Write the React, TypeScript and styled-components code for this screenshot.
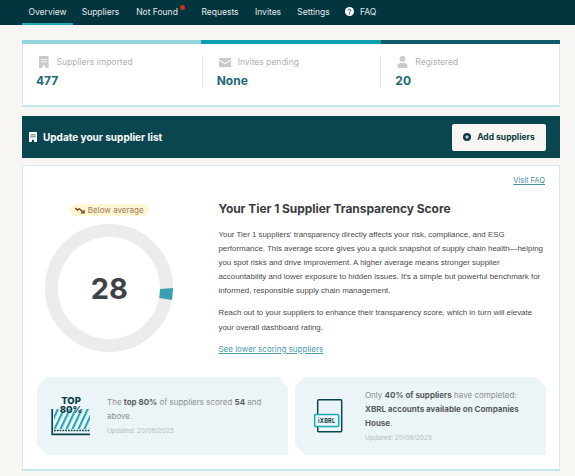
import React from 'react';
import styled, { createGlobalStyle } from 'styled-components';

const GlobalStyle = createGlobalStyle`
  html, body {
    margin: 0;
    padding: 0;
    background: #f7f6f2;
  }
  body {
    font-family: Inter, "Open Sans", sans-serif;
    color: #444;
  }
  * {
    box-sizing: border-box;
  }
`;

const NAV_ITEMS = [
  { label: 'Overview', width: 51, after: 2, active: true },
  { label: 'Suppliers', width: 51, after: 3 },
  { label: 'Not Found', width: 56, after: 10, dot: true },
  { label: 'Requests', width: 50, after: 3 },
  { label: 'Invites', width: 40, after: 2 },
  { label: 'Settings', width: 47, after: 10 },
];

const STAT_SEGMENTS = ['#93d5df', '#0f9fae', '#0f5c68'];

const BuildingIcon = ({ size = 12, color = '#c9cbc8' }: { size?: number; color?: string }) => (
  <svg width={size * 0.8} height={size} viewBox="0 0 10 12.5" fill={color}>
    <path
      fillRule="evenodd"
      d="M1 0h8a1 1 0 0 1 1 1v11.5H6.4V9.8H3.6v2.7H0V1a1 1 0 0 1 1-1zM1.8 3v1h6.4V3zM1.8 5.6v1h6.4v-1z"
    />
  </svg>
);

const MailIcon = () => (
  <svg width="12" height="9" viewBox="0 0 12 9" fill="#c9cbc8">
    <path d="M0 0h12v1.4L6 5 0 1.4z" />
    <path d="M0 2.6 6 6.2l6-3.6V9H0z" />
  </svg>
);

const UserIcon = () => (
  <svg width="11" height="12" viewBox="0 0 11 12" fill="#c9cbc8">
    <circle cx="5.5" cy="3" r="2.9" />
    <path d="M0.6 12V9.6C0.6 7.6 2.4 6.7 5.5 6.7s4.9.9 4.9 2.9V12z" />
  </svg>
);

const HelpIcon = () => (
  <svg width="9" height="9" viewBox="0 0 9 9">
    <circle cx="4.5" cy="4.5" r="4.5" fill="#fff" />
    <path d="M3.2 3.5c0-.8.6-1.3 1.3-1.3s1.3.5 1.3 1.2c0 1-1.2 1-1.2 2" fill="none" stroke="#03353f" strokeWidth="0.9" />
    <circle cx="4.5" cy="6.8" r="0.6" fill="#03353f" />
  </svg>
);

const PlusCircleIcon = () => (
  <svg width="8" height="8" viewBox="0 0 8 8">
    <circle cx="4" cy="4" r="4" fill="#0a3a44" />
    <path d="M4 2.2v3.6M2.2 4h3.6" stroke="#f7f6f2" strokeWidth="1.1" />
  </svg>
);

const TrendDownIcon = () => (
  <svg width="10" height="7" viewBox="0 0 10 7" fill="none">
    <path d="M0.3 1 2.6 3 4.3 1.8 7.5 4.6" stroke="#7d431a" strokeWidth="1.4" />
    <path d="M5.4 6.4h4.3V2.4z" fill="#7d431a" />
  </svg>
);

const Top80Icon = () => (
  <svg width="42" height="40" viewBox="0 0 42 40">
    <defs>
      <pattern id="hatch" width="5.4" height="5.4" patternUnits="userSpaceOnUse" patternTransform="rotate(25)">
        <rect width="2.1" height="5.4" fill="#1ea7b5" />
      </pattern>
    </defs>
    <rect x="3" y="13" width="36" height="20" fill="url(#hatch)" />
    <path d="M3 34.5h36" stroke="#0a4650" strokeWidth="1.3" strokeDasharray="1.8 1" />
    <path d="M1.2 13v25.4H39" fill="none" stroke="#0a4650" strokeWidth="1.7" />
    <Top80Label x="20" y="7.5" textAnchor="middle">TOP</Top80Label>
    <Top80Label x="20" y="16.5" textAnchor="middle">80%</Top80Label>
  </svg>
);

const XbrlIcon = () => (
  <svg width="34" height="36" viewBox="0 0 34 36">
    <rect x="4.7" y="1.7" width="24" height="32" rx="1" fill="none" stroke="#0a4650" strokeWidth="1.5" />
    <rect x="1.7" y="16.5" width="24" height="12" rx="1" fill="#ebf4f7" stroke="#1ea7b5" strokeWidth="1.5" />
    <XbrlLabel x="13.7" y="24.7" textAnchor="middle">iXBRL</XbrlLabel>
  </svg>
);

const Top80Label = styled.text`
  font-family: Inter, sans-serif;
  font-size: 9.5px;
  font-weight: 800;
  fill: #0a3a44;
  paint-order: stroke;
  stroke: #ebf4f7;
  stroke-width: 0.6px;
`;

const XbrlLabel = styled.text`
  font-family: Inter, sans-serif;
  font-size: 5.6px;
  font-weight: 700;
  letter-spacing: 0.2px;
  fill: #0a3a44;
`;

const ScoreGauge = ({ score }: { score: number }) => (
  <GaugeWrap>
    <svg width="128" height="128" viewBox="0 0 128 128">
      <circle cx="64" cy="64" r="57.5" fill="none" stroke="#ececec" strokeWidth="13" />
      <path d="M115 65 128 64 127 76 114.3 74z" fill="#37a0b2" />
    </svg>
    <GaugeValue>{score}</GaugeValue>
  </GaugeWrap>
);

const App = () => (
  <>
    <GlobalStyle />
    <Nav>
      {NAV_ITEMS.map((item) => (
        <NavItem key={item.label} $active={item.active} $width={item.width} $after={item.after}>
          {item.label}
          {item.dot && <NavDot />}
        </NavItem>
      ))}
      <FaqItem>
        <HelpIcon />
        FAQ
      </FaqItem>
    </Nav>
    <Page>
      <StatsCard>
        <StatsStrip>
          {STAT_SEGMENTS.map((color) => (
            <StripSegment key={color} $color={color} />
          ))}
        </StatsStrip>
        <StatsGrid>
          <StatCell>
            <StatLabel>
              <BuildingIcon />
              Suppliers imported
            </StatLabel>
            <StatValue>477</StatValue>
          </StatCell>
          <StatCell>
            <StatLabel>
              <MailIcon />
              Invites pending
            </StatLabel>
            <StatValue>None</StatValue>
          </StatCell>
          <StatCell>
            <StatLabel>
              <UserIcon />
              Registered
            </StatLabel>
            <StatValue>20</StatValue>
          </StatCell>
        </StatsGrid>
      </StatsCard>

      <Banner>
        <BannerTitle>
          <BuildingIcon size={10} color="#fff" />
          Update your supplier list
        </BannerTitle>
        <AddButton>
          <PlusCircleIcon />
          Add suppliers
        </AddButton>
      </Banner>

      <ScoreCard>
        <FaqLink>Visit FAQ</FaqLink>
        <ScoreBody>
          <GaugeColumn>
            <Badge>
              <TrendDownIcon />
              Below average
            </Badge>
            <ScoreGauge score={28} />
          </GaugeColumn>
          <Copy>
            <Heading>Your Tier 1 Supplier Transparency Score</Heading>
            <Paragraph>
              Your Tier 1 suppliers' transparency directly affects your risk, compliance, and ESG
              performance. This average score gives you a quick snapshot of supply chain health—helping
              you spot risks and drive improvement. A higher average means stronger supplier
              accountability and lower exposure to hidden issues. It's a simple but powerful benchmark for
              informed, responsible supply chain management.
            </Paragraph>
            <Paragraph>
              Reach out to your suppliers to enhance their transparency score, which in turn will elevate
              your overall dashboard rating.
            </Paragraph>
            <LowerLink>See lower scoring suppliers</LowerLink>
          </Copy>
        </ScoreBody>
        <InsightGrid>
          <Insight>
            <InsightIcon>
              <Top80Icon />
            </InsightIcon>
            <div>
              <InsightText>
                The <strong>top 80%</strong> of suppliers scored <strong>54</strong> and
                <br />
                above.
              </InsightText>
              <Updated>Updated: 20/08/2025</Updated>
            </div>
          </Insight>
          <Insight>
            <InsightIcon>
              <XbrlIcon />
            </InsightIcon>
            <div>
              <InsightText>
                Only <strong>40% of suppliers</strong> have completed:{' '}
                <strong>XBRL accounts available on Companies House</strong>.
              </InsightText>
              <Updated>Updated: 20/08/2025</Updated>
            </div>
          </Insight>
        </InsightGrid>
      </ScoreCard>
    </Page>
  </>
);

const Nav = styled.nav`
  display: flex;
  height: 25px;
  padding-left: 22px;
  background: #03353f;
`;

const NavItem = styled.a<{ $active?: boolean; $width: number; $after: number }>`
  position: relative;
  display: flex;
  align-items: center;
  justify-content: center;
  width: ${(p) => p.$width}px;
  margin-right: ${(p) => p.$after}px;
  font-size: 8.5px;
  color: #e0e8e9;
  border-bottom: 2px solid ${(p) => (p.$active ? '#1ea7b5' : 'transparent')};
`;

const NavDot = styled.span`
  position: absolute;
  top: 5px;
  right: 0;
  width: 5px;
  height: 5px;
  border-radius: 50%;
  background: #c9301f;
`;

const FaqItem = styled.a`
  display: flex;
  align-items: center;
  gap: 6px;
  margin-left: -2px;
  font-size: 8.5px;
  color: #e0e8e9;
  padding-bottom: 2px;
`;

const Page = styled.main`
  display: flex;
  flex-direction: column;
  width: 538px;
  margin-left: 22px;
  padding-top: 15px;
`;

const StatsCard = styled.section`
  height: 67px;
  background: #fff;
  border-left: 1px solid #d7ecf2;
  border-right: 1px solid #d7ecf2;
  border-bottom: 2px solid #c5e6ee;
`;

const StatsStrip = styled.div`
  display: flex;
  height: 4px;
  margin: 0 -1px;
`;

const StripSegment = styled.div<{ $color: string }>`
  flex: 1;
  background: ${(p) => p.$color};
`;

const StatsGrid = styled.div`
  display: grid;
  grid-template-columns: repeat(3, 1fr);
  padding-top: 11px;
`;

const StatCell = styled.div`
  height: 33px;
  padding-left: 15px;
  border-left: 1px solid #d7ecf2;

  &:first-child {
    padding-left: 14px;
    border-left: 0;
  }
`;

const StatLabel = styled.div`
  display: flex;
  align-items: center;
  gap: 7px;
  height: 14px;
  padding-left: 1px;
  font-size: 8.5px;
  color: #b0b2b1;

  ${StatCell}:first-child & {
    padding-left: 2px;
    gap: 8px;
  }
`;

const StatValue = styled.div`
  margin-top: 5px;
  margin-left: -1px;
  font-size: 12px;
  line-height: 14px;
  font-weight: 700;
  color: #1a6a78;
`;

const Banner = styled.section`
  display: flex;
  align-items: center;
  justify-content: space-between;
  height: 42px;
  margin-top: 9px;
  padding: 0 14px 0 7px;
  background: #0a4650;
`;

const BannerTitle = styled.h2`
  display: flex;
  align-items: center;
  gap: 6px;
  margin: 0;
  font-size: 10px;
  font-weight: 700;
  color: #fff;
`;

const AddButton = styled.button`
  display: flex;
  align-items: center;
  justify-content: center;
  gap: 6px;
  width: 94px;
  height: 27px;
  padding: 0;
  font-family: inherit;
  font-size: 8.5px;
  font-weight: 700;
  color: #0a3a44;
  background: #f7f6f2;
  border: 0;
  border-radius: 2px;
`;

const ScoreCard = styled.section`
  height: 306px;
  margin-top: 7px;
  padding: 10px 14px 0;
  background: #fff;
  border: 1px solid #d7ecf2;
  border-bottom: 2px solid #c5e6ee;
`;

const FaqLink = styled.a`
  display: block;
  font-size: 7.5px;
  line-height: 10px;
  text-align: right;
  text-decoration: underline;
  color: #4f8f9c;
`;

const ScoreBody = styled.div`
  display: flex;
  margin-top: 15px;
`;

const GaugeColumn = styled.div`
  display: flex;
  flex-direction: column;
  align-items: center;
  width: 146px;
  gap: 8px;
`;

const Badge = styled.div`
  display: flex;
  align-items: center;
  gap: 3px;
  height: 12px;
  margin-top: 3px;
  padding: 0 5px;
  border-radius: 6px;
  font-size: 8px;
  color: #a5795a;
  background: #fdf6d2;
`;

const GaugeWrap = styled.div`
  position: relative;
  width: 128px;
  height: 128px;
`;

const GaugeValue = styled.div`
  position: absolute;
  inset: 0;
  display: flex;
  align-items: center;
  justify-content: center;
  font-size: 29px;
  font-weight: 700;
  color: #3f4348;
`;

const Copy = styled.div`
  width: 330px;
  margin-left: 37px;
`;

const Heading = styled.h1`
  margin: 0;
  font-size: 12px;
  line-height: 16px;
  font-weight: 700;
  letter-spacing: -0.05px;
  color: #3a3d40;
`;

const Paragraph = styled.p`
  margin: 11px 0 0;
  font-family: "Liberation Sans", Arial, sans-serif;
  font-size: 7.9px;
  line-height: 14.1px;
  color: #4a4a4a;

  & + & {
    margin-top: 8px;
  }
`;

const LowerLink = styled.a`
  display: block;
  margin-top: 7px;
  font-size: 8px;
  line-height: 14px;
  text-decoration: underline;
  color: #4a9cab;
`;

const InsightGrid = styled.div`
  display: grid;
  grid-template-columns: 251px 251px;
  gap: 7px;
  margin-top: 21px;
`;

const Insight = styled.article`
  display: flex;
  align-items: center;
  height: 78px;
  padding-right: 12px;
  background: #ebf4f7;
  clip-path: polygon(10px 0, calc(100% - 10px) 0, 100% 10px, 100% 100%, 10px 100%, 0 calc(100% - 10px), 0 10px);
`;

const InsightIcon = styled.div`
  display: flex;
  justify-content: center;
  flex: none;
  width: 70px;
`;

const InsightText = styled.p`
  margin: 0;
  font-size: 8px;
  line-height: 14px;
  color: #8b8f91;

  strong {
    font-weight: 700;
    color: #5a5d60;
  }
`;

const Updated = styled.div`
  margin-top: 3px;
  font-size: 6.5px;
  line-height: 10px;
  color: #b4bcbf;
`;

export default App;
